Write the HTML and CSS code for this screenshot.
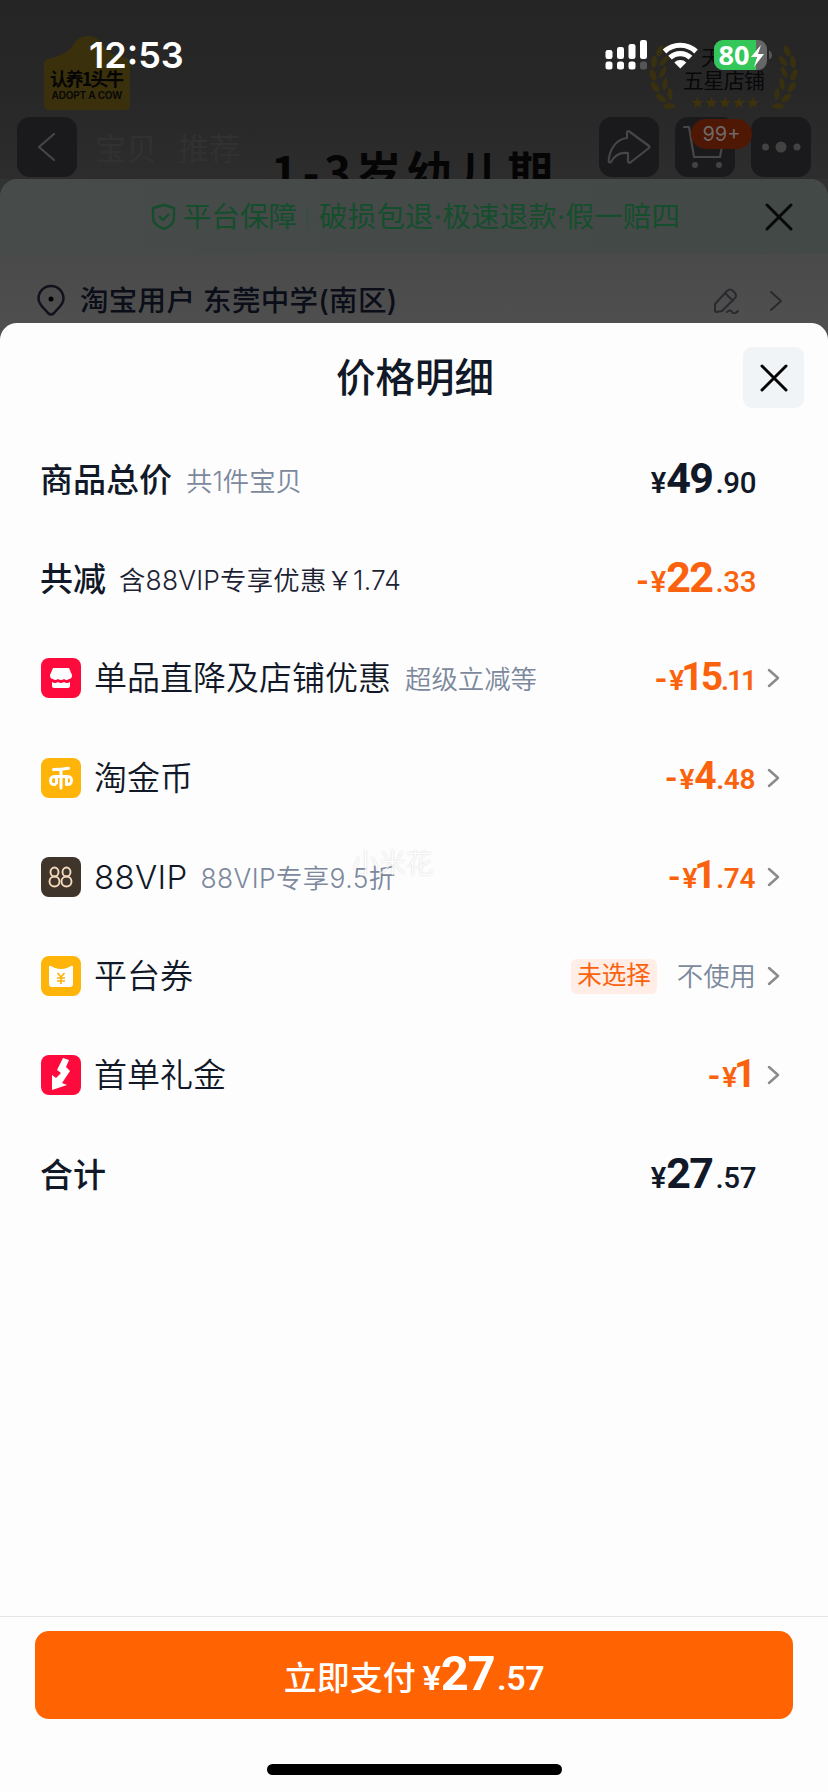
FILE: index.html
```html
<!DOCTYPE html>
<html lang="zh-CN">
<head>
<meta charset="utf-8">
<title>价格明细</title>
<link rel="stylesheet" href="styles.css">
</head>
<body>
<main class="screen">
  <section class="shop">
    <svg class="shop-art" width="828" height="200" viewBox="0 0 828 200">
      <path d="M44 64Q44 60 48 59C62 56 70 51 76 41Q81 36 89 36Q97 36 102 44Q109 56 126 58Q130 59 130 64V105Q130 110 125 110H49Q44 110 44 105Z" fill="#3b300c"/>
      <text x="87" y="86" class="art-brand" textLength="74">认养1头牛</text>
      <text x="87" y="99" class="art-brand-en" textLength="71">ADOPT A COW</text>
      <text x="722" y="65" class="art-medal">天猫</text>
      <text x="724" y="88" class="art-medal" textLength="82">五星店铺</text>
      <text x="725" y="108" class="art-stars" textLength="70">★★★★★</text>
      <g id="laurel" fill="#38300f">
        <ellipse cx="660" cy="51" rx="3" ry="6" transform="rotate(25 660 51)"/>
        <ellipse cx="654" cy="62" rx="3" ry="6" transform="rotate(5 654 62)"/>
        <ellipse cx="664" cy="61" rx="2.6" ry="6" transform="rotate(40 664 61)"/>
        <ellipse cx="653" cy="75" rx="3" ry="6" transform="rotate(-20 653 75)"/>
        <ellipse cx="663" cy="72" rx="2.6" ry="6" transform="rotate(25 663 72)"/>
        <ellipse cx="655" cy="87" rx="3" ry="6" transform="rotate(-35 655 87)"/>
        <ellipse cx="665" cy="84" rx="2.6" ry="6" transform="rotate(10 665 84)"/>
        <ellipse cx="661" cy="98" rx="3" ry="6" transform="rotate(-50 661 98)"/>
        <ellipse cx="670" cy="94" rx="2.6" ry="6" transform="rotate(-5 670 94)"/>
        <ellipse cx="669" cy="106" rx="6" ry="3"/>
      </g>
      <use href="#laurel" transform="matrix(-1 0 0 1 1447 0)"/>
      <text x="95" y="160" class="art-tab">宝贝</text>
      <text x="178" y="160" class="art-tab">推荐</text>
      <text x="271" y="190" class="art-headline" textLength="282">1-3岁幼儿期</text>
    </svg>
    <nav class="shop-nav">
      <span class="nav-btn nav-back"><svg width="60" height="60" viewBox="0 0 60 60"><path d="M37 17L22 30L37 43"/></svg></span>
      <span class="nav-btn"><svg width="60" height="60" viewBox="0 0 60 60"><path d="M28 21V15Q29 13 31 15L50 29Q51 30 50 31L32 45Q29 47 29 44V36C20 35 15 39 12 45Q9 47 10 41C12 29 19 22 28 21Z"/></svg></span>
      <span class="nav-btn"><svg width="60" height="60" viewBox="0 0 60 60"><path d="M9 10H14L19 40H45L48 24"/><circle cx="20" cy="48" r="3" class="dot"/><circle cx="44" cy="48" r="3" class="dot"/></svg><b class="cart-count">99+</b></span>
      <span class="nav-btn"><svg width="60" height="60" viewBox="0 0 60 60"><circle cx="14.500" cy="30" r="3.500" class="dot"/><circle cx="30" cy="30" r="5.500" class="dot"/><circle cx="46" cy="30" r="3.500" class="dot"/></svg></span>
    </nav>
    <div class="status">
      <span class="clock">12:53</span>
      <svg class="status-icons" width="170" height="34" viewBox="602 37 170 34">
        <g fill="#fff">
          <rect x="605.500" y="50" width="7" height="9" rx="2.300"/><rect x="617" y="47" width="7" height="12" rx="2.300"/><rect x="628.500" y="44" width="7" height="15" rx="2.300"/><rect x="640" y="40" width="7" height="19" rx="2.300"/>
          <rect x="605.500" y="61.500" width="7" height="8" rx="2.500"/><rect x="617" y="61.500" width="7" height="8" rx="2.500"/><rect x="628.500" y="61.500" width="7" height="8" rx="2.500"/>
        </g>
        <rect x="640" y="61.500" width="7" height="8" rx="2.500" fill="#555"/>
        <g fill="none" stroke="#fff" stroke-width="5.200"><path d="M664.500 51.500A23 23 0 0 1 696 51.500"/><path d="M670 57.700A15 15 0 0 1 690.500 57.700"/></g>
        <path d="M680.300 68.500L674.300 62.500A8.500 8.500 0 0 1 686.300 62.500Z" fill="#fff"/>
        <rect x="714" y="40" width="53" height="30" rx="9" fill="#666"/>
        <path d="M723 40H756V70H723A9 9 0 0 1 714 61V49A9 9 0 0 1 723 40Z" fill="#33c759"/>
        <path d="M769 50.500Q772 52 772 55T769 59.500Z" fill="#555"/>
        <text x="718.500" y="64.500" class="battery-text" textLength="31" lengthAdjust="spacingAndGlyphs">80</text>
        <path d="M761 45L751 57H757L754 67L764 54H758Z" fill="#fff"/>
      </svg>
    </div>
  </section>

  <section class="order">
    <header class="guard">
      <svg width="26" height="28" viewBox="0 0 26 28"><path d="M13 2L23 5V15C23 20 18 24 13 26C8 24 2 20 2 15V5Z"/><path d="M8 13L12 17L18 11"/></svg>
      <span class="guard-name">平台保障</span><i class="guard-bar"></i><span class="guard-terms">破损包退·极速退款·假一赔四</span>
      <svg class="guard-close" width="30" height="30" viewBox="0 0 30 30"><path d="M3 3L27 27M27 3L3 27"/></svg>
    </header>
    <div class="address">
      <svg class="pin" width="30" height="34" viewBox="0 0 30 34"><path d="M15 2A12.500 12.500 0 0 1 27.500 14.500C27.500 21 22 24 18 29Q15 32 12 29C8 24 2.500 21 2.500 14.500A12.500 12.500 0 0 1 15 2Z"/><circle cx="15" cy="15" r="2.500"/></svg>
      <span class="address-text">淘宝用户 东莞中学(南区)</span>
      <svg class="edit" width="26" height="26" viewBox="0 0 26 26"><path d="M2 16L14 3Q17 0 20 3L22 5Q24 8 22 10L9 23L3 24L2 23ZM12 5L20 13M14 24Q17 21 19 24T25 23"/></svg>
      <svg class="go" width="14" height="22" viewBox="0 0 14 22"><path d="M2 2L12 11L2 20"/></svg>
    </div>
  </section>

  <section class="detail">
    <header class="detail-head">
      <h1>价格明细</h1>
      <button class="close"><svg width="28" height="28" viewBox="0 0 28 28"><path d="M2 2L26 26M26 2L2 26"/></svg></button>
    </header>
    <ul class="rows">
      <li class="row"><span class="name strong">商品总价</span><span class="note">共1件宝贝</span><span class="price"><i>¥</i><b>49</b><em>.90</em></span></li>
      <li class="row"><span class="name strong">共减</span><span class="note dark">含88VIP专享优惠￥1.74</span><span class="price off"><u>-</u><i>¥</i><b>22</b><em>.33</em></span></li>
      <li class="row">
        <svg class="icon" width="40" height="40" viewBox="0 0 40 40"><rect width="40" height="40" rx="8" fill="#ff0a3c"/><path d="M12 10H28L31 17Q31 21 28 21Q25.500 23 23 21Q20 23 17 21Q14 23 12 21Q9 21 9 17Z" fill="#fff"/><path d="M11 24Q14 26 17 24Q20 26 23 24Q26 26 29 24V28Q29 30 27 30H13Q11 30 11 28Z" fill="#fff"/></svg>
        <span class="name">单品直降及店铺优惠</span><span class="note">超级立减等</span><span class="price off small"><u>-</u><i>¥</i><b class="teen">15</b><em class="ones">.11</em></span><svg class="chevron" width="13" height="20" viewBox="0 0 13 20"><path d="M2 2L11 10L2 18"/></svg>
      </li>
      <li class="row">
        <svg class="icon" width="40" height="40" viewBox="0 0 40 40"><rect width="40" height="40" rx="8" fill="#ffb40a"/><path d="M12.500 11.500Q20 11.500 27.500 10.300M20 12V30M15.500 18.500Q9.500 18 9.500 22.500Q9.500 27 14 26.500M15.500 18.500V25M15.500 18.500H25Q30.500 18 30.500 22.500Q30.500 27 25.500 26.500V20" fill="none" stroke="#fff" stroke-width="3" stroke-linecap="round"/></svg>
        <span class="name">淘金币</span><span class="price off small"><u>-</u><i>¥</i><b>4</b><em>.48</em></span><svg class="chevron" width="13" height="20" viewBox="0 0 13 20"><path d="M2 2L11 10L2 18"/></svg>
      </li>
      <li class="row">
        <svg class="icon" width="40" height="40" viewBox="0 0 40 40"><rect width="40" height="40" rx="8" fill="#40352b"/><g fill="none" stroke="#f4d9bd" stroke-width="1.900"><ellipse cx="13.500" cy="15" rx="4" ry="4.500"/><ellipse cx="13.500" cy="24.500" rx="5" ry="5"/><ellipse cx="25.500" cy="15" rx="4" ry="4.500"/><ellipse cx="25.500" cy="24.500" rx="5" ry="5"/></g></svg>
        <span class="name vip">88VIP</span><span class="note vip-note">88VIP专享9.5折</span><span class="price off small"><u>-</u><i>¥</i><b class="one">1</b><em>.74</em></span><svg class="chevron" width="13" height="20" viewBox="0 0 13 20"><path d="M2 2L11 10L2 18"/></svg>
        <span class="watermark">小米花</span>
      </li>
      <li class="row">
        <svg class="icon" width="40" height="40" viewBox="0 0 40 40"><rect width="40" height="40" rx="8" fill="#ffb40a"/><path d="M8 11Q8 9 10 10L14 12Q20 14 26 12L30 10Q32 9 32 11V28Q32 31 29 31H11Q8 31 8 28Z" fill="#fff"/><path d="M16.500 17L20 21L23.500 17M20 21V28M16 22H24M16 25H24" fill="none" stroke="#ffb40a" stroke-width="1.700"/></svg>
        <span class="name">平台券</span><span class="tag">未选择</span><span class="unused">不使用</span><svg class="chevron" width="13" height="20" viewBox="0 0 13 20"><path d="M2 2L11 10L2 18"/></svg>
      </li>
      <li class="row">
        <svg class="icon" width="40" height="40" viewBox="0 0 40 40"><rect width="40" height="40" rx="8" fill="#ff0a3c"/><path d="M22 3L28 5L25 12L29 16L21 28L26 30L11 35V20L15 23L20 18L16 15Z" fill="#fff"/></svg>
        <span class="name">首单礼金</span><span class="price off small"><u>-</u><i>¥</i><b class="one">1</b></span><svg class="chevron" width="13" height="20" viewBox="0 0 13 20"><path d="M2 2L11 10L2 18"/></svg>
      </li>
      <li class="row"><span class="name strong">合计</span><span class="price"><i>¥</i><b>27</b><em>.57</em></span></li>
    </ul>
    <footer class="pay-bar">
      <button class="pay"><span class="pay-label">立即支付</span><span class="price pay-price"><i>¥</i><b>27</b><em>.57</em></span></button>
      <div class="home"></div>
    </footer>
  </section>
</main>
</body>
</html>
```
FILE: styles.css
```css
* { box-sizing: border-box; }
body { margin: 0; }
.screen {
  position: relative;
  z-index: 0;
  width: 828px;
  height: 1792px;
  display: flex;
  flex-direction: column;
  overflow: hidden;
  background: #323232;
  color: #111827;
  font-family: Inter, "Noto Sans CJK SC", sans-serif;
}
svg { flex: none; display: block; }
i, em { font-style: normal; }
u { text-decoration: none; }

/* dimmed product page */
.shop {
  position: relative;
  flex: none;
  height: 179px;
  padding: 117px 17px 0;
  background: linear-gradient(#252526, #272728 50%, #2e2d2d);
}
.shop-art { position: absolute; left: 0; top: 0; }
.art-brand { font: 700 18px "Noto Sans CJK SC", sans-serif; fill: #050505; text-anchor: middle; }
.art-brand-en { font: 700 10px Inter, sans-serif; fill: #0a0a08; text-anchor: middle; }
.art-medal { font: 400 21px "Noto Sans CJK SC", sans-serif; fill: #080808; text-anchor: middle; }
.art-stars { font: 16px "DejaVu Sans", sans-serif; fill: #40320a; text-anchor: middle; }
.art-tab { font: 400 31px "Noto Sans CJK SC", sans-serif; fill: #323131; }
.art-headline { font: 700 46px "Noto Sans CJK SC", sans-serif; fill: #050505; }
.shop-nav { position: relative; display: flex; gap: 16px; }
.nav-btn { position: relative; width: 60px; height: 60px; border-radius: 13px; background: #1a1a1c; }
.nav-back { margin-right: 506px; }
.nav-btn path { fill: none; stroke: #464646; stroke-width: 2.200; stroke-linecap: round; stroke-linejoin: round; }
.nav-btn .dot { fill: #424242; }
.cart-count {
  position: absolute;
  left: 16px;
  top: 2px;
  width: 61px;
  height: 30px;
  border-radius: 15px;
  background: #4e1804;
  color: #706866;
  font: 400 20px/30px Inter, sans-serif;
  text-align: center;
  z-index: 1;
}
.status { position: absolute; left: 0; right: 56px; top: 37px; height: 34px; display: flex; justify-content: space-between; align-items: center; padding-left: 89px; }
.clock { margin-top: 2px; color: #fff; font-weight: 600; font-size: 36px; line-height: 34px; }
.battery-text { font: 700 27px "Noto Sans", sans-serif; fill: #fff; }

/* dimmed order sheet */
.order { position: relative; flex: none; height: 144px; border-radius: 18px 18px 0 0; background: linear-gradient(#464a49, #4a4a4a 60%, #4f4f4f); overflow: hidden; }
.guard { position: relative; height: 75px; display: flex; align-items: center; padding-left: 151px; background: linear-gradient(90deg, #474b4a, #434947); color: #144e2d; font-size: 28.500px; line-height: 40px; white-space: nowrap; }
.guard svg path { fill: none; stroke: #144e2d; stroke-width: 2.400; stroke-linejoin: round; }
.guard-name { margin-left: 6px; }
.guard-terms { letter-spacing: .2px; }
.guard-bar { width: 1px; height: 20px; margin: 0 11px 0 10px; background: #285438; }
.guard .guard-close { margin-left: auto; margin-right: 34px; }
.guard .guard-close path { stroke: #080808; stroke-width: 3; stroke-linecap: round; }
.address { display: flex; align-items: center; height: 69px; padding: 24px 45px 0 36px; font-size: 28.500px; line-height: 40px; color: #0b0e18; font-weight: 500; }
.address path { fill: none; stroke: #2a2a2e; stroke-width: 2; stroke-linecap: round; stroke-linejoin: round; }
.address .pin path { stroke: #11131c; stroke-width: 2.500; }
.address-text { margin-left: 14px; letter-spacing: .3px; }
.edit { margin-left: auto; margin-right: 30px; }

/* price sheet */
.detail { position: relative; flex: 1; min-height: 0; display: flex; flex-direction: column; border-radius: 17px 17px 0 0; background: #fdfdfd; }
.detail::before { content: ""; position: absolute; z-index: -1; left: 0; right: 0; top: 0; height: 24px; background: #4f4f4f; }
.detail-head { height: 107px; display: flex; align-items: flex-start; justify-content: center; position: relative; }
h1 { margin: 27px 0 0; padding-left: 2px; font-size: 39.500px; line-height: 56px; font-weight: 500; }
.close { position: absolute; right: 24px; top: 24px; width: 61px; height: 61px; border: 0; border-radius: 9px; padding: 0; background: #f0f4f7; display: grid; place-items: center; }
.close path { stroke: #050505; stroke-width: 3; stroke-linecap: round; }
.rows { list-style: none; margin: 0; padding: 0; display: grid; grid-auto-rows: 99.300px; }
.row { position: relative; display: flex; align-items: center; padding: 0 48px 0 41px; white-space: nowrap; }
.icon { margin-right: 13px; }
.name { font-size: 33px; line-height: 48px; font-weight: 350; }
.strong { margin-left: -1px; font-weight: 500; }
.vip { letter-spacing: .3px; }
.note { margin-left: 14px; margin-top: 2px; font-size: 26.400px; line-height: 38px; color: #7c889c; font-weight: 350; }
.note.dark { margin-left: 13px; color: #1c2233; letter-spacing: .2px; }
.vip-note { margin-left: 13px; letter-spacing: .4px; }
.price { margin-left: auto; margin-right: 24px; padding-top: 1px; display: flex; align-items: baseline; font-family: Roboto, sans-serif; line-height: 48px; }
.row .price + .chevron { margin-left: -12px; }
.price i { font-size: 29px; font-weight: 600; }
.price b { font-size: 43px; font-weight: 700; letter-spacing: -1.500px; }
.price em { margin-left: 3px; font-size: 29.500px; font-weight: 500; letter-spacing: -.4px; }
.price u { margin-right: 2px; font-size: 34px; font-weight: 600; }
.off { color: #fb620d; }
.price.small b { font-size: 39px; }
.small i, .price.small em { font-size: 28px; }
.price.small em { margin-left: 1px; font-weight: 600; }
.price.small .teen { margin-left: -3px; letter-spacing: -3px; }
.price.small .ones { letter-spacing: -2px; }
.price.small .one { margin-left: -3px; }
.chevron path { fill: none; stroke: #8b8b8e; stroke-width: 2.500; stroke-linecap: round; stroke-linejoin: round; }
.tag { margin-left: auto; height: 35px; padding: 0 6px; border-radius: 6px; background: #ffede6; color: #fb620d; font-size: 24.500px; line-height: 33px; }
.unused { margin-left: 20px; margin-right: 11px; font-size: 26.400px; line-height: 38px; font-weight: 350; color: #7c889c; }
.watermark { position: absolute; left: 352px; top: 17px; font-size: 27px; line-height: 40px; font-weight: 300; color: #fff; text-shadow: 0 0 2px #bbb; opacity: .7; }
.pay-bar { margin-top: auto; height: 176px; border-top: 1px solid #e5e5e3; padding: 14px 35px 0; }
.pay { width: 100%; height: 88px; border: 0; border-radius: 14px; padding: 3px 0 0; background: #ff6302; color: #fff; display: flex; align-items: baseline; justify-content: center; font-family: inherit; }
.pay-label { font-size: 33px; line-height: 88px; font-weight: 500; }
.pay-price { margin: 0 0 0 7px; padding: 0; }
.price.pay-price b { font-size: 49px; }
.pay-price i, .price.pay-price em { font-size: 34px; }
.price.pay-price em { font-weight: 600; }
.home { width: 295px; height: 11px; margin: 45px auto 0; border-radius: 6px; background: #000; }
```
